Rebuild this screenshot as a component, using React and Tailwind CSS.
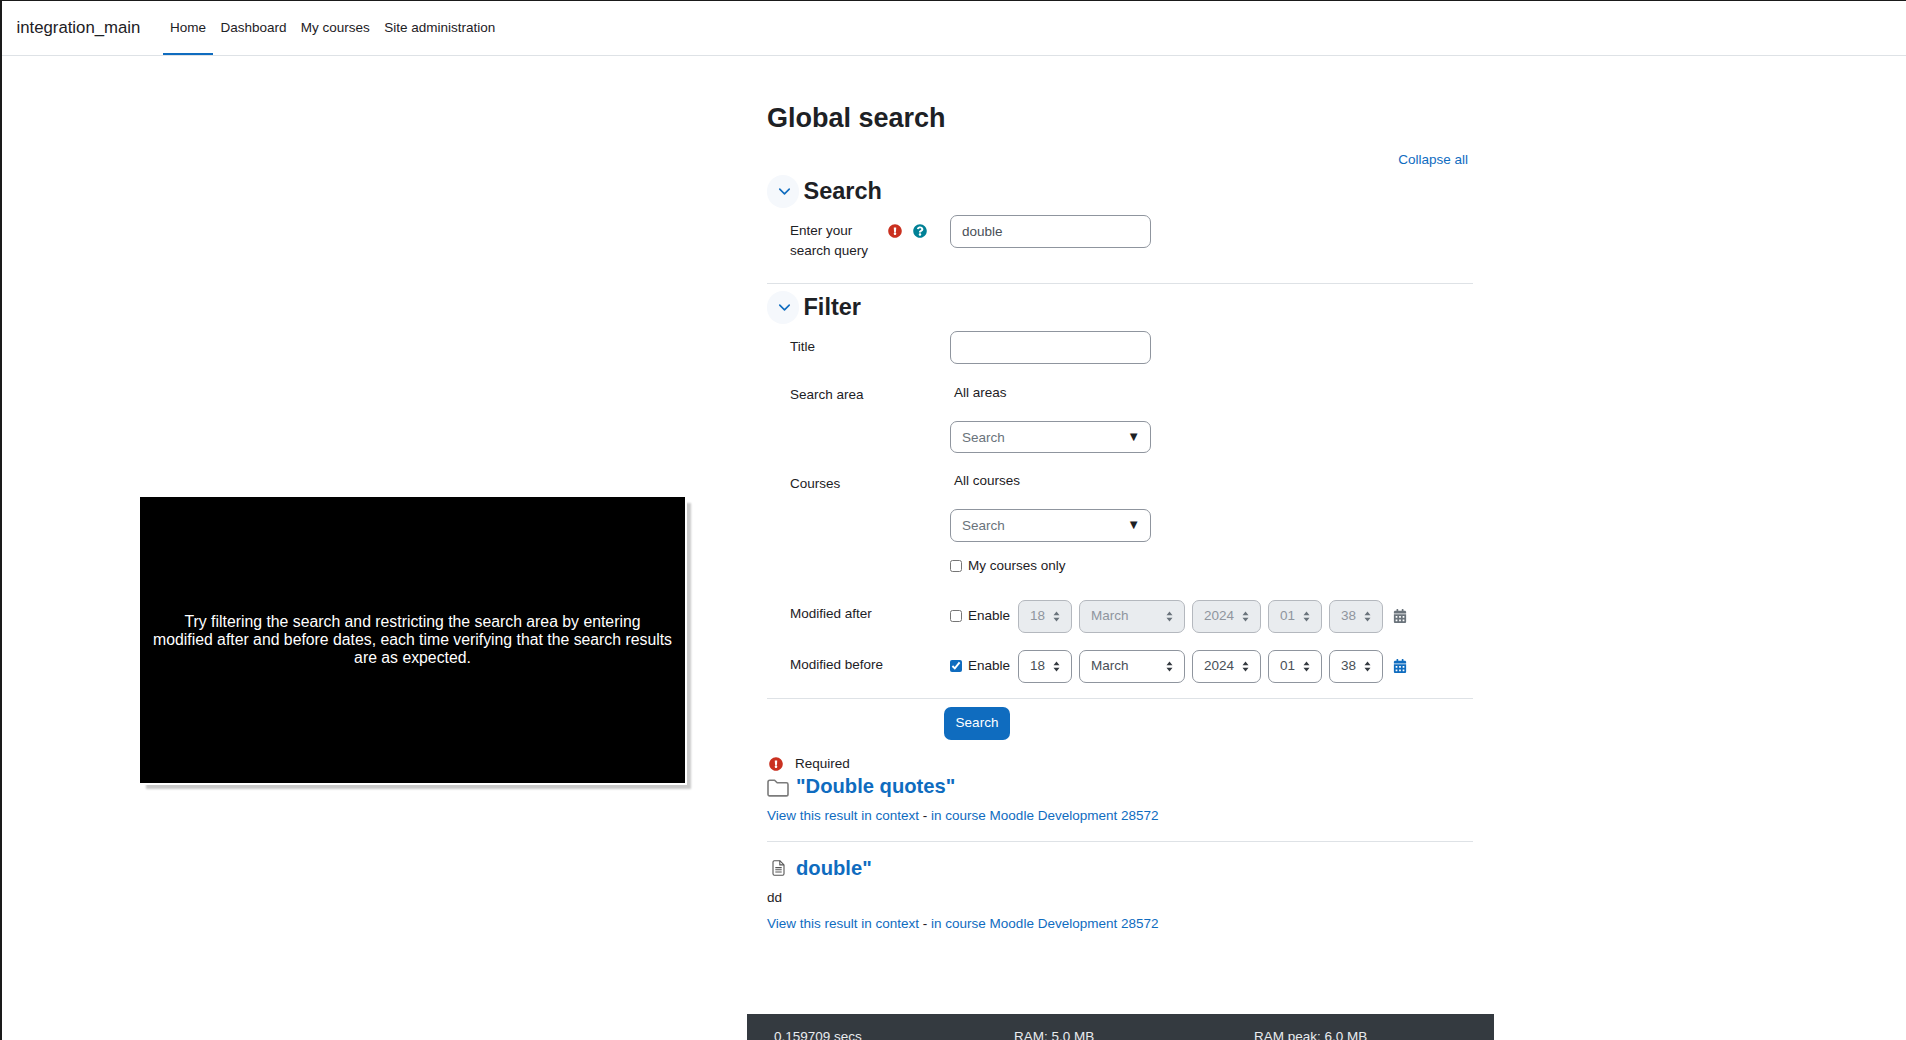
import { ChevronDown } from 'lucide-react';
import { FaCalendarAlt, FaExclamationCircle, FaQuestionCircle } from 'react-icons/fa';

const navItems = ['Home', 'Dashboard', 'My courses', 'Site administration'];
const dateFields = [
  { value: '18', width: 'w-[53.500px]' },
  { value: 'March', width: 'w-[105.500px]' },
  { value: '2024', width: 'w-[68.500px]' },
  { value: '01', width: 'w-[53.500px]' },
  { value: '38', width: 'w-[54px]' },
];

function FolderIcon() {
  return (
    <svg viewBox="0 0 22 18" className="mt-[3px] h-[18px] w-[22px]" fill="none" stroke="#7b7b7b" strokeWidth="1.6" strokeLinejoin="round">
      <path d="M1 3.2C1 2 1.7 1.2 2.8 1.2h4.8l2.6 2.6h9.2c.9 0 1.6.7 1.6 1.6v9.8c0 1-.7 1.7-1.7 1.7H2.7C1.7 17 1 16.300 1 15.300V3.200z" />
    </svg>
  );
}

function DocIcon() {
  return (
    <svg viewBox="0 0 13 16" className="h-[16px] w-[13px]" fill="none" stroke="#555" strokeWidth="1.100" strokeLinejoin="round">
      <path d="M1 2.200C1 1.300 1.600.7 2.400.7h5.400L12 4.900v8.900c0 .9-.6 1.500-1.400 1.500H2.400c-.8 0-1.400-.6-1.400-1.500V2.200z" />
      <path d="M7.800.7v4.200H12M3.300 7.600h6.400M3.300 9.800h6.400M3.300 12h6.400" />
    </svg>
  );
}

function Section({ title }) {
  return (
    <div className="flex items-center">
      <span className="flex h-[33px] w-[32px] items-center justify-center rounded-full bg-[#f5f8fc]">
        <ChevronDown size={19} strokeWidth={2} className="ml-[2px] text-[#0f6cbf]" />
      </span>
      <h3 className="ml-[4.500px] text-[23.500px] font-bold leading-[33px] text-[#1d2125]">{title}</h3>
    </div>
  );
}

function TextField({ value }) {
  return (
    <input
      defaultValue={value}
      className="h-[33px] w-[201px] rounded-[7px] border border-[#8f959e] bg-white px-[11px] text-[13.500px] text-[#495057] outline-none"
    />
  );
}

function SearchSelect({ height = 'h-[33px]' }) {
  return (
    <div className="relative w-[201px]">
      <input
        placeholder="Search"
        className={`${height} w-full rounded-[7px] border border-[#8f959e] bg-white px-[11px] text-[13.500px] text-[#495057] outline-none placeholder:text-[#6a737b]`}
      />
      <span className="absolute right-[11px] top-[6px] text-[13px] leading-[20px] text-[#1d2125]">▼</span>
    </div>
  );
}

function DateSelect({ value, width, disabled }) {
  return (
    <div className={`relative ${width}`}>
      <select
        disabled={disabled}
        defaultValue={value}
        className={`h-[33px] w-full appearance-none rounded-[7px] border pl-[11px] text-[13.500px] outline-none ${
          disabled ? 'border-[#b4b8be] bg-[#e9ecef] text-[#8f959e]' : 'border-[#8f959e] bg-white text-[#495057]'
        }`}
      >
        <option>{value}</option>
      </select>
      <svg viewBox="0 0 7 11" className="pointer-events-none absolute right-[12px] top-[11px] h-[11px] w-[7px]" fill={disabled ? '#6a737b' : '#343a40'}>
        <path d="M3.500 0.500L6.500 4.300H.5zM3.500 10.500L.5 6.700h6z" />
      </svg>
    </div>
  );
}

function DateRow({ label, enabled, disabled, labelTop }) {
  return (
    <div className="flex">
      <label className={`${labelTop} w-[183px] pl-[23px] leading-[20px]`}>{label}</label>
      <div className="flex items-center">
        <input type="checkbox" defaultChecked={enabled} className="mb-[1px] h-[12px] w-[12px] accent-[#0f6cbf]" />
        <span className="ml-[6px] mr-[8px] w-[42px]">Enable</span>
        <div className="flex gap-[7.500px]">
          {dateFields.map((f) => (
            <DateSelect key={f.value} value={f.value} width={f.width} disabled={disabled} />
          ))}
        </div>
        <FaCalendarAlt size={14} className={`mb-[2px] ml-[9.500px] ${disabled ? 'text-[#6a737b]' : 'text-[#0f6cbf]'}`} />
      </div>
    </div>
  );
}

function ResultLinks() {
  return (
    <p className="leading-[20px] text-[#1d2125]">
      <a className="text-[#0f6cbf]">View this result in context</a> - <a className="text-[#0f6cbf]">in course Moodle Development 28572</a>
    </p>
  );
}

export default function App() {
  return (
    <div className="h-[1040px] overflow-hidden border-l-2 border-t border-[#1a1a1a] bg-white font-['Liberation_Sans',Arial,sans-serif] text-[13.500px] text-[#1d2125]">
      <nav className="flex h-[55px] items-stretch border-b border-[#dee2e6] pl-[14.500px]">
        <span className="mr-[22.500px] self-center text-[16.750px]">integration_main</span>
        {navItems.map((item, i) => (
          <a
            key={item}
            className={`flex items-center border-b-2 px-[7.200px] pt-[2px] ${i === 0 ? 'border-[#0f6cbf]' : 'border-transparent'}`}
          >
            {item}
          </a>
        ))}
      </nav>

      <div className="flex">
        <aside className="w-[745px] pl-[138px] pt-[441px]">
          <div className="flex h-[286px] w-[545px] items-center justify-center bg-black text-center text-[15.800px] leading-[18px] text-white shadow-[2px_2px_0_0_#fff,6px_6px_2px_0_#c9c9c9]">
            <p className="whitespace-nowrap">
              Try filtering the search and restricting the search area by entering
              <br />
              modified after and before dates, each time verifying that the search results
              <br />
              are as expected.
            </p>
          </div>
        </aside>

        <div className="w-[747px]">
          <main className="h-[958px] pl-[20px] pr-[21px] pt-[46px]">
            <h2 className="text-[27px] font-bold leading-[33px]">Global search</h2>
            <p className="mt-[15px] pr-[5px] text-right leading-[20px] text-[#0f6cbf]">Collapse all</p>

            <div className="mt-[5px]">
              <Section title="Search" />
              <div className="mt-[7px] flex">
                <div className="flex w-[183px] items-start pl-[23px]">
                  <label className="mt-[6px] w-[98px] leading-[20px]">Enter your search query</label>
                  <FaExclamationCircle size={14} className="mt-[9px] text-[#ca3120]" />
                  <FaQuestionCircle size={14} className="ml-[11px] mt-[9px] text-[#008196]" />
                </div>
                <TextField value="double" />
              </div>
            </div>

            <hr className="mt-[22px] border-[#dee2e6]" />

            <div className="mt-[7px]">
              <Section title="Filter" />
              <div className="mt-[7px] flex">
                <label className="mt-[6px] w-[183px] pl-[23px] leading-[20px]">Title</label>
                <TextField value="" />
              </div>
              <div className="mt-[19px] flex">
                <label className="mt-[2px] w-[183px] pl-[23px] leading-[20px]">Search area</label>
                <div>
                  <p className="pl-[4px] leading-[20px]">All areas</p>
                  <div className="mt-[18px]">
                    <SearchSelect height="h-[32px]" />
                  </div>
                </div>
              </div>
              <div className="mt-[18px] flex">
                <label className="mt-[3px] w-[183px] pl-[23px] leading-[20px]">Courses</label>
                <div>
                  <p className="pl-[4px] leading-[20px]">All courses</p>
                  <div className="mt-[18px]">
                    <SearchSelect />
                  </div>
                  <div className="mt-[14px] flex items-center leading-[20px]">
                    <input type="checkbox" className="h-[12px] w-[12px]" />
                    <span className="ml-[6px]">My courses only</span>
                  </div>
                </div>
              </div>
              <div className="mt-[24px]">
                <DateRow label="Modified after" labelTop="mt-[4px]" disabled />
              </div>
              <div className="mt-[17px]">
                <DateRow label="Modified before" labelTop="mt-[5px]" enabled />
              </div>
            </div>

            <hr className="mt-[15px] border-[#dee2e6]" />

            <div className="mt-[8px] pl-[177px]">
              <button className="h-[33px] w-[66px] rounded-[7px] bg-[#0f6cbf] text-white">Search</button>
            </div>

            <div className="mt-[14px] flex items-center leading-[20px]">
              <FaExclamationCircle size={14} className="ml-[1.500px] text-[#ca3120]" />
              <span className="ml-[12.500px]">Required</span>
            </div>

            <div className="flex items-center">
              <FolderIcon />
              <a className="ml-[7px] text-[20.200px] font-bold leading-[24px] text-[#0f6cbf]">"Double quotes"</a>
            </div>
            <div className="mt-[8px]">
              <ResultLinks />
            </div>
            <hr className="mt-[15px] border-[#dee2e6]" />

            <div className="mt-[14px] flex items-center">
              <span className="ml-[5px] flex">
                <DocIcon />
              </span>
              <a className="ml-[11px] text-[20.200px] font-bold leading-[24px] text-[#0f6cbf]">double"</a>
            </div>
            <p className="mt-[8px] leading-[20px]">dd</p>
            <div className="mt-[6px]">
              <ResultLinks />
            </div>
          </main>

          <footer className="flex h-[80px] bg-[#343a40] pl-[27px] pt-[13px] leading-[20px] text-[#e9ecef]">
            <span className="w-[240px]">0.159709 secs</span>
            <span className="w-[240px]">RAM: 5.0 MB</span>
            <span>RAM peak: 6.0 MB</span>
          </footer>
        </div>
      </div>
    </div>
  );
}
